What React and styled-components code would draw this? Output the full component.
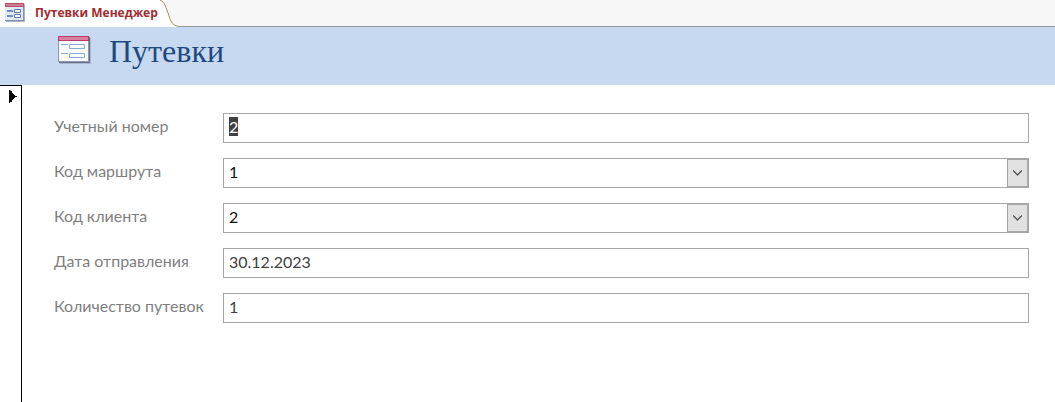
import React, { useEffect, useRef } from "react";
import styled, { createGlobalStyle } from "styled-components";

const GlobalStyle = createGlobalStyle`
  * { box-sizing: border-box; }
  body { margin: 0; background: #fff; }
`;

const Page = styled.div`
  min-height: 100vh;
  display: flex;
  flex-direction: column;
  font-family: Lato, "Open Sans", sans-serif;
`;

const TabBar = styled.nav`
  display: flex;
  height: 27px;
  background: #f7f7f7;
`;

const Tab = styled.button`
  display: flex;
  align-items: center;
  gap: 10px;
  height: 27px;
  padding: 0 2px 2px 5px;
  border: 0;
  background: #fff;
  color: #a02c30;
  font: bold 12px/20px "Open Sans", "Noto Sans", sans-serif;
  white-space: nowrap;
`;

const TabEdge = styled.svg`
  flex: none;
  display: block;
`;

const TabRest = styled.div`
  flex: 1;
  border-bottom: 1px solid #969696;
`;

const Header = styled.header`
  display: flex;
  align-items: flex-start;
  gap: 18px;
  height: 58px;
  padding: 8px 0 0 57px;
  background: #c6d9f1;
`;

const Title = styled.h1`
  margin: 0;
  color: #1f497d;
  font: normal 32px/32px "Liberation Serif", serif;
`;

const Body = styled.main`
  flex: 1;
  display: flex;
`;

const RecordSelector = styled.button`
  flex: none;
  display: flex;
  align-items: flex-start;
  width: 22px;
  padding: 4px 0 0 9px;
  border: solid #000;
  border-width: 1px 1px 0 0;
  background: #fff;
`;

const Form = styled.form`
  flex: 1;
  display: flex;
  flex-direction: column;
  gap: 15px;
  padding: 28px 26px 28px 32px;
`;

const Row = styled.div`
  display: grid;
  grid-template-columns: 169px 1fr;
  height: 30px;
`;

const Label = styled.label`
  color: #7f7f7f;
  font-size: 16px;
  line-height: 26px;
  white-space: nowrap;
`;

const TextBox = styled.input`
  width: 100%;
  height: 30px;
  padding: 0 5px 3px;
  border: 1px solid #a6a6a6;
  border-radius: 0;
  outline: 0;
  background: #fff;
  color: #404040;
  font: 16px/22px Lato, "Open Sans", sans-serif;

  &::selection {
    background: #404040;
    color: #fff;
  }
`;

const Combo = styled.div`
  display: grid;
  grid-template-columns: 1fr 22px;
`;

const Select = styled.select`
  grid-area: 1 / 1 / 2 / 3;
  width: 100%;
  height: 30px;
  padding: 0 28px 2px 5px;
  border: 1px solid #a6a6a6;
  border-radius: 0;
  appearance: none;
  background: #fff;
  color: #111;
  font: 16px/22px Lato, "Open Sans", sans-serif;
`;

const Arrow = styled.span`
  grid-area: 1 / 2 / 2 / 3;
  z-index: 1;
  display: flex;
  align-items: center;
  justify-content: center;
  border: solid #a6a6a6;
  border-width: 2px 2px 2px 1px;
  background: #e1e1e1;
  pointer-events: none;
`;

function SmallFormIcon() {
  return (
    <svg width="20" height="19" viewBox="0 0 20 19" aria-hidden="true">
      <rect x="1" y="1" width="19" height="18" fill="#a9b2c0" />
      <rect x="0" y="0" width="19" height="18" fill="#7f90ad" />
      <rect x="0" y="4" width="18" height="13" fill="#e3e9f3" />
      <rect x="0" y="0" width="19" height="4" fill="#b5506f" />
      <rect x="1" y="1" width="17" height="2" fill="#cf7c93" />
      <path d="M2 8h6M2 13h6" stroke="#6f8fc2" strokeWidth="2" />
      <path d="M9.5 6.5h6v3h-6zM9.5 11.5h6v3h-6z" fill="#fff" stroke="#5578b4" />
    </svg>
  );
}

function LargeFormIcon() {
  return (
    <svg width="34" height="29" viewBox="0 0 34 29" aria-hidden="true">
      <rect x="3" y="3" width="31" height="26" fill="#a7b6cc" />
      <rect x="2" y="2" width="31" height="26" fill="#66738a" />
      <rect x="1" y="1" width="31" height="26" fill="#8f98aa" />
      <rect x="2" y="5" width="29" height="21" fill="#fafbfd" />
      <rect x="1" y="1" width="31" height="5" fill="#b63d6b" />
      <rect x="2" y="2" width="29" height="3" fill="#d9819f" />
      <path d="M4 9.5h7M4 18.5h7" stroke="#86abd9" />
      <path d="M12.5 9.5h15v4h-15zM12.5 18.5h15v4h-15z" fill="#fff" stroke="#86abd9" />
    </svg>
  );
}

function SelectField({ id, value, options }) {
  return (
    <Combo>
      <Select id={id} defaultValue={value}>
        {options.map((option) => (
          <option key={option}>{option}</option>
        ))}
      </Select>
      <Arrow>
        <svg width="9" height="6" viewBox="0 0 9 6" aria-hidden="true">
          <path d="M0 .5 4.5 5 9 .5" fill="none" stroke="#404040" strokeWidth="1.2" />
        </svg>
      </Arrow>
    </Combo>
  );
}

export default function App() {
  const numberRef = useRef(null);

  useEffect(() => {
    numberRef.current.focus();
    numberRef.current.select();
  }, []);

  return (
    <Page>
      <GlobalStyle />
      <TabBar>
        <Tab type="button">
          <SmallFormIcon />
          Путевки Менеджер
        </Tab>
        <TabEdge width="19" height="27" viewBox="0 0 19 27" aria-hidden="true">
          <path d="M0 0C5 2 6 8 8 13S11 26 19 26.5V27H0z" fill="#fff" />
          <path d="M0 0C5 2 6 8 8 13S11 26 19 26.5" fill="none" stroke="#a08c64" />
        </TabEdge>
        <TabRest />
      </TabBar>
      <Header>
        <LargeFormIcon />
        <Title>Путевки</Title>
      </Header>
      <Body>
        <RecordSelector type="button" aria-label="Текущая запись">
          <svg width="8" height="13" viewBox="0 0 8 13" aria-hidden="true">
            <path d="M0 0h1l1 1h1v2h1v1h1v1h1v1h2v1H6v1H5v1H4v1H3v2H1v1H0z" fill="#000" />
          </svg>
        </RecordSelector>
        <Form>
          <Row>
            <Label htmlFor="number">Учетный номер</Label>
            <TextBox id="number" ref={numberRef} defaultValue="2" />
          </Row>
          <Row>
            <Label htmlFor="route">Код маршрута</Label>
            <SelectField id="route" value="1" options={["1", "2"]} />
          </Row>
          <Row>
            <Label htmlFor="client">Код клиента</Label>
            <SelectField id="client" value="2" options={["1", "2"]} />
          </Row>
          <Row>
            <Label htmlFor="date">Дата отправления</Label>
            <TextBox id="date" defaultValue="30.12.2023" />
          </Row>
          <Row>
            <Label htmlFor="count">Количество путевок</Label>
            <TextBox id="count" defaultValue="1" />
          </Row>
        </Form>
      </Body>
    </Page>
  );
}
